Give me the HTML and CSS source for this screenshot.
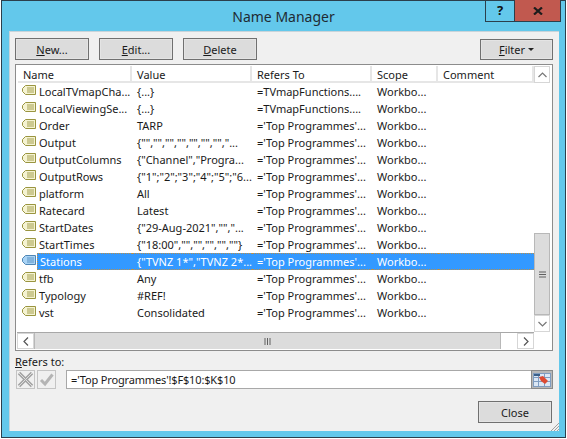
FILE: index.html
```html
<!DOCTYPE html>
<html lang="en">
<head>
<meta charset="utf-8">
<title>Name Manager</title>
<link rel="stylesheet" href="styles.css">
</head>
<body>
<svg class="defs" width="0" height="0" aria-hidden="true">
  <symbol id="tag" viewBox="0 0 14 10">
    <path d="M3.5 .5H13.5V9.5H3.5L.5 6.5V3.5Z" fill="#f5f3d2" stroke="#9a9540"/>
    <path d="M5 3H12M5 5H12M5 7H12" stroke="#a5a050"/>
  </symbol>
  <symbol id="tag-sel" viewBox="0 0 14 10">
    <path d="M3.5 .5H13.5V9.5H3.5L.5 6.5V3.5Z" fill="#a9d3f5" stroke="#4f86b5"/>
    <path d="M5 3H12M5 5H12M5 7H12" stroke="#5a93c4"/>
  </symbol>
</svg>
<div class="window">
  <div class="titlebar">
    <div class="title">Name Manager</div>
    <div class="controls">
      <div class="help">?</div>
      <div class="close-x">
        <svg width="10" height="8" viewBox="0 0 10 8"><path d="M1 .5L9 7.5M9 .5L1 7.5" stroke="#1c1c1c" stroke-width="2.2" fill="none"/></svg>
      </div>
    </div>
  </div>
  <div class="client">
    <div class="toolbar">
      <div class="btn"><span><u>N</u>ew...</span></div>
      <div class="btn"><span><u>E</u>dit...</span></div>
      <div class="btn"><span><u>D</u>elete</span></div>
      <div class="btn filter"><span><u>F</u>ilter</span><i class="caret"></i></div>
    </div>
    <div class="list">
      <div class="list-main">
        <div class="list-body">
          <div class="row head">
            <div>Name</div><div>Value</div><div>Refers To</div><div>Scope</div><div>Comment</div>
          </div>
          <div class="row"><div><svg class="tag"><use href="#tag"/></svg>LocalTVmapCha...</div><div>{...}</div><div>=TVmapFunctions....</div><div>Workbo...</div><div></div></div>
          <div class="row"><div><svg class="tag"><use href="#tag"/></svg>LocalViewingSe...</div><div>{...}</div><div>=TVmapFunctions....</div><div>Workbo...</div><div></div></div>
          <div class="row"><div><svg class="tag"><use href="#tag"/></svg>Order</div><div>TARP</div><div>='Top Programmes'...</div><div>Workbo...</div><div></div></div>
          <div class="row"><div><svg class="tag"><use href="#tag"/></svg>Output</div><div>{"","","","","","","","...</div><div>='Top Programmes'...</div><div>Workbo...</div><div></div></div>
          <div class="row"><div><svg class="tag"><use href="#tag"/></svg>OutputColumns</div><div>{"Channel","Progra...</div><div>='Top Programmes'...</div><div>Workbo...</div><div></div></div>
          <div class="row"><div><svg class="tag"><use href="#tag"/></svg>OutputRows</div><div>{"1";"2";"3";"4";"5";"6...</div><div>='Top Programmes'...</div><div>Workbo...</div><div></div></div>
          <div class="row"><div><svg class="tag"><use href="#tag"/></svg>platform</div><div>All</div><div>='Top Programmes'...</div><div>Workbo...</div><div></div></div>
          <div class="row"><div><svg class="tag"><use href="#tag"/></svg>Ratecard</div><div>Latest</div><div>='Top Programmes'...</div><div>Workbo...</div><div></div></div>
          <div class="row"><div><svg class="tag"><use href="#tag"/></svg>StartDates</div><div>{"29-Aug-2021","","...</div><div>='Top Programmes'...</div><div>Workbo...</div><div></div></div>
          <div class="row"><div><svg class="tag"><use href="#tag"/></svg>StartTimes</div><div>{"18:00","","","","",""}</div><div>='Top Programmes'...</div><div>Workbo...</div><div></div></div>
          <div class="row selected"><div><svg class="tag"><use href="#tag-sel"/></svg><span class="sel-name">Stations</span></div><div>{"TVNZ 1*","TVNZ 2*...</div><div>='Top Programmes'...</div><div>Workbo...</div><div></div></div>
          <div class="row"><div><svg class="tag"><use href="#tag"/></svg>tfb</div><div>Any</div><div>='Top Programmes'...</div><div>Workbo...</div><div></div></div>
          <div class="row"><div><svg class="tag"><use href="#tag"/></svg>Typology</div><div>#REF!</div><div>='Top Programmes'...</div><div>Workbo...</div><div></div></div>
          <div class="row"><div><svg class="tag"><use href="#tag"/></svg>vst</div><div>Consolidated</div><div>='Top Programmes'...</div><div>Workbo...</div><div></div></div>
        </div>
        <div class="vscroll">
          <div class="sb-btn v"><svg width="9" height="6" viewBox="0 0 9 6"><path d="M.5 5L4.5 1L8.5 5" fill="none" stroke="#777" stroke-width="1.2"/></svg></div>
          <div class="v-track"></div>
          <div class="v-thumb"><svg width="7" height="7" viewBox="0 0 7 7"><path d="M0 1H7M0 3.5H7M0 6H7" stroke="#606060"/></svg></div>
          <div class="v-tail"></div>
          <div class="sb-btn v"><svg width="9" height="6" viewBox="0 0 9 6"><path d="M.5 1L4.5 5L8.5 1" fill="none" stroke="#777" stroke-width="1.2"/></svg></div>
        </div>
      </div>
      <div class="hscroll">
        <div class="sb-btn h"><svg width="6" height="9" viewBox="0 0 6 9"><path d="M5 .5L1 4.5L5 8.5" fill="none" stroke="#555" stroke-width="1.2"/></svg></div>
        <div class="h-thumb"><svg width="7" height="7" viewBox="0 0 7 7"><path d="M1 0V7M3.5 0V7M6 0V7" stroke="#606060"/></svg></div>
        <div class="h-tail"></div>
        <div class="sb-btn h"><svg width="6" height="9" viewBox="0 0 6 9"><path d="M1 .5L5 4.5L1 8.5" fill="none" stroke="#555" stroke-width="1.2"/></svg></div>
      </div>
    </div>
    <div class="refers-label"><u>R</u>efers to:</div>
    <div class="refers-row">
      <div class="mini">
        <svg width="17" height="17" viewBox="0 0 17 17"><path d="M2 2L15 15M15 2L2 15" stroke="#a4a4a4" stroke-width="3.4" fill="none"/><path d="M2 2L15 15M15 2L2 15" stroke="#dedede" stroke-width="1" fill="none"/></svg>
      </div>
      <div class="mini">
        <svg width="17" height="17" viewBox="0 0 17 17"><path d="M3 9L7 13L14.5 3.5" stroke="#b4b4b4" stroke-width="3" fill="none"/></svg>
      </div>
      <div class="formula">='Top Programmes'!$F$10:$K$10</div>
      <div class="picker">
        <svg width="18" height="14" viewBox="0 0 18 14">
          <rect x=".5" y=".5" width="17" height="13" fill="#dbe7f5" stroke="#7f9cc0"/>
          <path d="M0 4.5H18M0 8.5H18M5.5 0V14M11.5 0V14" stroke="#7f9cc0"/>
          <rect x="1" y="1" width="6" height="2" fill="#3a5f8a"/>
          <path d="M6 4L10 3L15 8L12 11L8 8Z" fill="#dd4a32"/>
        </svg>
      </div>
    </div>
    <div class="footer">
      <div class="btn close"><span>Close</span></div>
    </div>
    <svg class="grip" width="9" height="9" viewBox="0 0 9 9"><path d="M9 1L1 9M9 4L4 9M9 7L7 9" stroke="#a0a0a0"/></svg>
  </div>
</div>
</body>
</html>
```
FILE: styles.css
```css
* { box-sizing: border-box; }
html, body { margin: 0; height: 100%; }
body {
  background: #fff;
  padding: 0 1px;
  font-family: "Noto Sans", "Open Sans", sans-serif;
  font-size: 11px;
  color: #1a1a1a;
  overflow: hidden;
}
.defs { position: absolute; }
.window {
  width: 565px;
  height: 438px;
  background: #63c8eb;
  border: 1px solid #2b3f4c;
  display: flex;
  flex-direction: column;
}
.titlebar {
  height: 30px;
  flex: none;
  position: relative;
  display: flex;
  justify-content: center;
}
.title {
  font-size: 14px;
  line-height: 31px;
  color: #1f2b33;
}
.controls {
  position: absolute;
  top: -1px;
  right: 4px;
  display: flex;
  height: 22px;
}
.help {
  width: 29px;
  border: 1px solid #2b3f4c;
  border-top: 0;
  border-right: 0;
  text-align: center;
  font-weight: 700;
  font-size: 13px;
  line-height: 20px;
  color: #111;
}
.close-x {
  width: 47px;
  background: #c1594f;
  border: 1px solid #2b3f4c;
  border-top: 0;
  display: flex;
  align-items: center;
  justify-content: center;
}
.client {
  width: 550px;
  height: 400px;
  margin-left: 7px;
  background: #f0f0f0;
  border: 1px solid #c8d4da;
  border-width: 1px 0 0 1px;
  padding: 6px 6px 0 5px;
  position: relative;
  flex: none;
}
.toolbar {
  display: flex;
  gap: 10px;
  height: 23px;
}
.btn {
  width: 74px;
  height: 22px;
  background: #dcdcdc;
  border: 1px solid #707070;
  box-shadow: inset 0 0 0 1px #e4e4e4;
  display: flex;
  align-items: center;
  justify-content: center;
  font-size: 11px;
}
.filter {
  margin: 1px 0 0 auto;
  width: 73px;
  height: 21px;
  gap: 3px;
}
.caret {
  width: 0;
  height: 0;
  border: 3px solid transparent;
  border-top: 3px solid #222;
  border-bottom: 0;
}
.list {
  margin-top: 3px;
  width: 538px;
  height: 287px;
  border: 1px solid #8c8c8c;
  padding: 1px 2px 1px 1px;
  background: #fff;
  display: flex;
  flex-direction: column;
}
.list-main { display: flex; height: 266px; flex: none; }
.list-body { width: 517px; flex: none; padding-left: 1px; }
.row {
  display: grid;
  grid-template-columns: 114px 120px 120px 66px 96px;
  height: 17px;
  line-height: 17px;
  white-space: nowrap;
}
.row > div {
  padding-left: 5px;
  overflow: hidden;
  display: flex;
  align-items: center;
}
.tag { width: 14px; height: 10px; margin: -3px 3px 0 -1px; flex: none; }
.row.head { background: #fff; }
.row.head > div {
  border-right: 2px solid #e6e6e6;
  border-bottom: 2px solid #e6e6e6;
  padding-top: 2px;
}
.row.selected { color: #fff; }
.row.selected > div {
  background: #3399ff;
  border-top: 1px dotted #b98f4a;
  border-bottom: 1px dotted #b98f4a;
}
.row.selected > div:first-child {
  background: #fff;
  border: 0;
}
.sel-name {
  flex: 1;
  align-self: stretch;
  margin-left: -2px;
  padding-left: 2px;
  background: #3399ff;
  border: 1px dotted #b98f4a;
  border-right: 0;
  line-height: 15px;
}
.vscroll {
  width: 17px;
  display: flex;
  flex-direction: column;
  height: 266px;
}
.sb-btn {
  flex: none;
  display: flex;
  align-items: center;
  justify-content: center;
  background: #fff;
  border: 1px solid #d6d6d6;
}
.sb-btn.v { height: 17px; }
.sb-btn.h { width: 17px; }
.v-track { height: 150px; flex: none; }
.v-thumb {
  height: 82px;
  flex: none;
  background: #dcdcdc;
  border: 1px solid #b8b8b8;
  display: flex;
  align-items: center;
  justify-content: center;
}
.v-tail { flex: 1; }
.hscroll {
  display: flex;
  flex: none;
  height: 17px;
  width: 517px;
  border-top: 1px solid #a8a8a8;
}
.h-thumb {
  width: 467px;
  flex: none;
  background: #dcdcdc;
  border-left: 1px solid #b8b8b8;
  border-right: 1px solid #b8b8b8;
  display: flex;
  align-items: center;
  justify-content: flex-end;
  padding-right: 229px;
}
.h-tail { flex: 1; }
.refers-label {
  margin-top: 3px;
  height: 15px;
  line-height: 15px;
  font-size: 11px;
}
.refers-row {
  display: flex;
  height: 19px;
  margin-top: 1px;
}
.mini {
  width: 19px;
  height: 19px;
  margin: 0 1px 0 1px;
  border: 1px solid #c4c4c4;
  display: flex;
  align-items: center;
  justify-content: center;
}
.formula {
  margin-left: 9px;
  width: 465px;
  background: #fff;
  border: 1px solid #a8a8a8;
  border-right: 0;
  padding-left: 4px;
  line-height: 17px;
  letter-spacing: -.15px;
}
.picker {
  width: 22px;
  background: #b8b8b8;
  border: 1px solid #8a8a8a;
  display: flex;
  align-items: center;
  justify-content: center;
}
.footer {
  display: flex;
  justify-content: flex-end;
  margin-top: 12px;
  padding-right: 1px;
}
.close { height: 22px; }
.grip { position: absolute; right: 0; bottom: 0; }
```
